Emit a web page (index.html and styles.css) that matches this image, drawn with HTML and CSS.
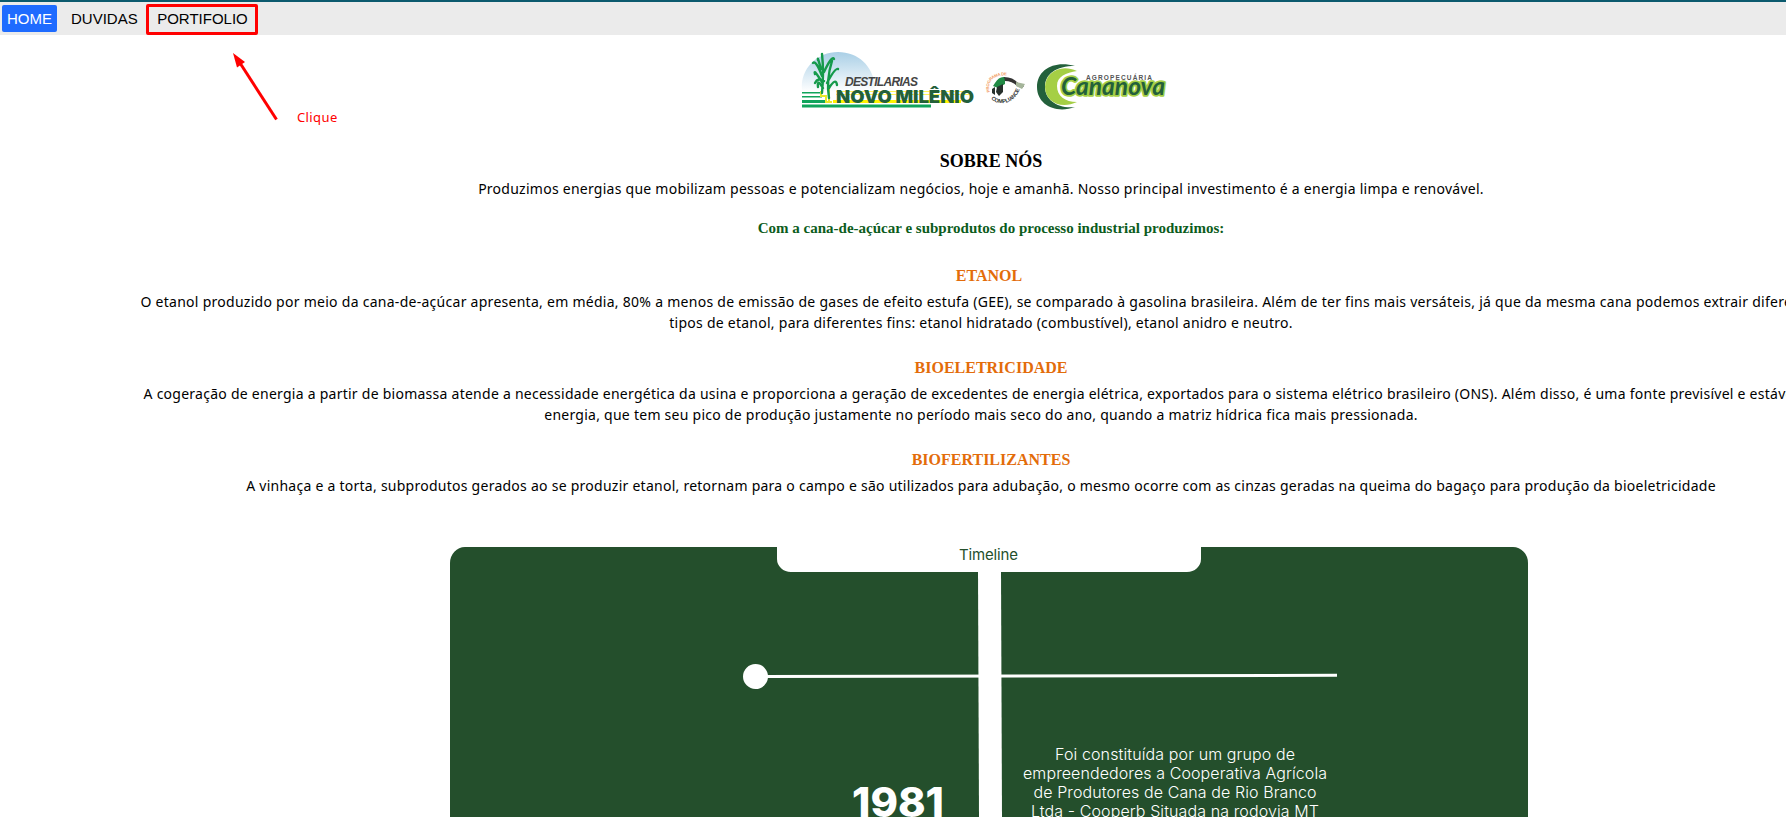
FILE: index.html
```html
<!DOCTYPE html>
<html lang="pt-BR">
<head>
<meta charset="utf-8">
<title>Destilarias Novo Milênio</title>
<link rel="stylesheet" href="styles.css">
</head>
<body>
<nav class="nav">
  <a class="nav-link active">HOME</a>
  <a class="nav-link">DUVIDAS</a>
  <a class="nav-link marked">PORTIFOLIO</a>
</nav>
<svg class="arrow" width="60" height="80" viewBox="0 0 60 80"><path d="M46.500 69.500L10 13" stroke="#f00" stroke-width="3"/><path d="M3 3L15 12L7 17.500Z" fill="#f00"/></svg>
<span class="hint">Clique</span>
<main class="page">
  <header class="brand">
    <svg width="400" height="80" viewBox="780 40 400 80">
      <defs>
        <linearGradient id="sky" x1="0" y1="0" x2="0" y2="1"><stop offset="0" stop-color="#a9cfe6"/><stop offset="1" stop-color="#fff"/></linearGradient>
      </defs>
      <path d="M802 90C800 68 818 52 838 52S873 66 875 86L874 92H802Z" fill="url(#sky)"/>
      <path d="M836 91.500H971M836 94.500H971" stroke="#fff45a" stroke-width="1.200"/>
      <path d="M833 100H961V103H833Z" fill="#fff200"/>
      <path d="M802 92H821V93.500H802ZM802 96H822V97.500H802ZM802 100H827V103H802ZM802 104.500H931V107.500H802Z" fill="#10a45b"/>
      <path d="M821 91V96H826V102H832M829 88V102" stroke="#e8e82a" stroke-width="2" fill="none"/>
      <g fill="none" stroke="#159a4b" stroke-width="2.400" stroke-linecap="round">
        <path d="M822 93Q824 72 822 54M829 98Q826 80 832 61M822 76Q816 60 813 63M824 72Q832 55 834 59M822 82Q813 68 815 74M827 83Q835 68 838 69M829 88Q836 77 837 85M821 69Q817 55 818 60M823 88Q817 78 818 87M824 81Q818 77 815 83"/>
      </g>
      <text class="logo-top" x="845" y="86" textLength="73">DESTILARIAS</text>
      <text class="logo-main" x="836" y="103" textLength="138" lengthAdjust="spacingAndGlyphs">NOVO MILÊNIO</text>
      <path id="arcTop" d="M990 92C986 80 996 73 1012 76" fill="none"/>
      <path id="arcBottom" d="M991 99C998 106 1015 105 1020 88" fill="none"/>
      <text class="arc-orange"><textPath href="#arcTop" textLength="29">PROGRAMA DE</textPath></text>
      <text class="arc-black"><textPath href="#arcBottom" textLength="36">COMPLIANCE</textPath></text>
      <path d="M995 83Q999 76 1005 77L1005 84L998 88L993 86Z" fill="#218a45"/>
      <path d="M1004 77Q1013 77 1018 83L1024 86L1022 88L1017 86Q1012 81 1005 81Z" fill="#333"/>
      <path d="M1016 82L1025 84L1022 89L1016 86Z" fill="#a5b59a"/>
      <path d="M997 87L1003 84L1003 92L999 96L996 92ZM992 89L995 87V95L992 93Z" fill="#27302c"/>
      <path d="M1075 66C1055 60 1037 69 1037 87S1056 114 1075 107C1058 109 1045 100 1045 87S1056 66 1075 66Z" fill="#23603b"/>
      <path d="M1077 71C1060 63 1045 73 1045 87S1060 110 1077 102C1065 102 1057 96 1057 86S1066 73 1077 71Z" fill="#a5cf45"/>
      <text class="cana" x="1061" y="95" textLength="104" lengthAdjust="spacingAndGlyphs">Cananova</text>
      <text class="cana-top" x="1086" y="79.500" textLength="66">AGROPECUÁRIA</text>
    </svg>
  </header>

  <h2 class="title about">SOBRE NÓS</h2>
  <p class="copy">Produzimos energias que mobilizam pessoas e potencializam negócios, hoje e amanhã. Nosso principal investimento é a energia limpa e renovável.</p>
  <h4 class="title lead">Com a cana-de-açúcar e subprodutos do processo industrial produzimos:</h4>

  <h3 class="title topic etanol">ETANOL</h3>
  <p class="copy"><span class="loose">O etanol produzido por meio da cana-de-açúcar apresenta, em média, 80% a menos de emissão de gases de efeito estufa (GEE), se comparado à gasolina brasileira. Além de ter fins mais versáteis, já que da mesma cana podemos extrair diferentes</span><br>tipos de etanol, para diferentes fins: etanol hidratado (combustível), etanol anidro e neutro.</p>

  <h3 class="title topic">BIOELETRICIDADE</h3>
  <p class="copy">A cogeração de energia a partir de biomassa atende a necessidade energética da usina e proporciona a geração de excedentes de energia elétrica, exportados para o sistema elétrico brasileiro (ONS). Além disso, é uma fonte previsível e estável de<br>energia, que tem seu pico de produção justamente no período mais seco do ano, quando a matriz hídrica fica mais pressionada.</p>

  <h3 class="title topic">BIOFERTILIZANTES</h3>
  <p class="copy">A vinhaça e a torta, subprodutos gerados ao se produzir etanol, retornam para o campo e são utilizados para adubação, o mesmo ocorre com as cinzas geradas na queima do bagaço para produção da bioeletricidade</p>

  <section class="timeline">
    <svg width="1078" height="270" viewBox="450 547 1078 270">
      <path d="M450 817V563A15 16 0 0 1 465 547H777V559A14 13 0 0 0 791 572H1187A14 13 0 0 0 1201 559V547H1513A15 16 0 0 1 1528 563V817Z" fill="#244f2c"/>
      <path d="M978 571H1001L1002 817H979Z" fill="#fff"/>
      <path d="M755 676.500L1337 675.300" stroke="#fff" stroke-width="3"/>
      <circle cx="755.500" cy="676.500" r="12.500" fill="#fff"/>
      <text class="tl-tab" x="959" y="560" textLength="59">Timeline</text>
      <text class="tl-year" x="852" y="817" textLength="92" lengthAdjust="spacingAndGlyphs">1981</text>
      <g class="tl-copy">
        <text x="1175" y="760" textLength="240">Foi constituída por um grupo de</text>
        <text x="1175" y="779" textLength="304">empreendedores a Cooperativa Agrícola</text>
        <text x="1175" y="798" textLength="283">de Produtores de Cana de Rio Branco</text>
        <text x="1175" y="817" textLength="288">Ltda - Cooperb Situada na rodovia MT</text>
      </g>
    </svg>
  </section>
</main>
</body>
</html>
```
FILE: styles.css
```css
body {
  margin: 0;
  width: 1786px;
  height: 817px;
  overflow: hidden;
  background: #fff;
  color: #000;
}

.nav {
  box-sizing: border-box;
  display: flex;
  align-items: flex-start;
  height: 35px;
  padding: 3px 0 0 2px;
  border-top: 2px solid #0b5a6e;
  background: #ebebeb;
  font: 15px/27px "Liberation Sans", Arial, sans-serif;
}

.nav-link {
  box-sizing: border-box;
  height: 27px;
  padding: 0 5px;
  margin-right: 9px;
  border-radius: 2px;
}

.active {
  background: #1e6bff;
  color: #fff;
}

.marked {
  width: 112px;
  height: 31px;
  margin: -1px 0 0 -5.500px;
  padding: 0 8px;
  border: 3px solid #f00;
  line-height: 23px;
}

.arrow {
  position: absolute;
  left: 230px;
  top: 50px;
}

.hint {
  position: absolute;
  left: 297px;
  top: 107px;
  color: #f00;
  font: 13px/20px "Noto Sans", sans-serif;
  letter-spacing: 0.400px;
}

.page {
  width: 1702px;
  margin-left: 130px;
}

.brand {
  height: 80px;
  padding: 5px 0 0 650px;
}

.brand svg,
.timeline svg {
  display: block;
}

.logo-top { font: italic bold 12px "Liberation Sans", sans-serif; fill: #444; }
.logo-main { font: 900 18px Inter, sans-serif; fill: #23603b; }
.arc-orange { font: bold 4.200px "Liberation Sans", sans-serif; fill: #f29b63; }
.arc-black { font: bold 5.500px "Liberation Sans", sans-serif; fill: #333; }
.cana-top { font: bold 6.500px "Liberation Sans", sans-serif; fill: #555; }
.cana {
  font: italic bold 25px Lato, sans-serif;
  fill: #23603b;
  stroke: #a5cf45;
  stroke-width: 3.500px;
  stroke-linejoin: round;
  paint-order: stroke;
}

.title {
  margin: 0;
  padding-left: 20px;
  text-align: center;
  font-family: "Liberation Serif", "Times New Roman", serif;
  font-weight: bold;
}

.about {
  padding-top: 28px;
  padding-bottom: 3px;
  font-size: 18px;
  line-height: 27px;
}

.lead {
  padding-top: 18px;
  padding-bottom: 2px;
  color: #0c5c1c;
  font-size: 15px;
  line-height: 22px;
}

.topic {
  padding-top: 23px;
  padding-bottom: 3px;
  color: #e36c0a;
  font-size: 16px;
  line-height: 24px;
}

.etanol {
  padding-right: 4px;
}

.copy {
  margin: 0;
  text-align: center;
  white-space: nowrap;
  font: 14px/21px "Noto Sans", sans-serif;
  letter-spacing: 0.255px;
}

.loose {
  letter-spacing: 0.272px;
}

.timeline {
  margin: 51px 0 0 320px;
}

.tl-tab { font: 15px Inter, sans-serif; fill: #244f2c; }
.tl-year { font: 800 41px Inter, sans-serif; fill: #fff; }
.tl-copy { font: 350 16px Inter, sans-serif; fill: #fff; text-anchor: middle; }
```
